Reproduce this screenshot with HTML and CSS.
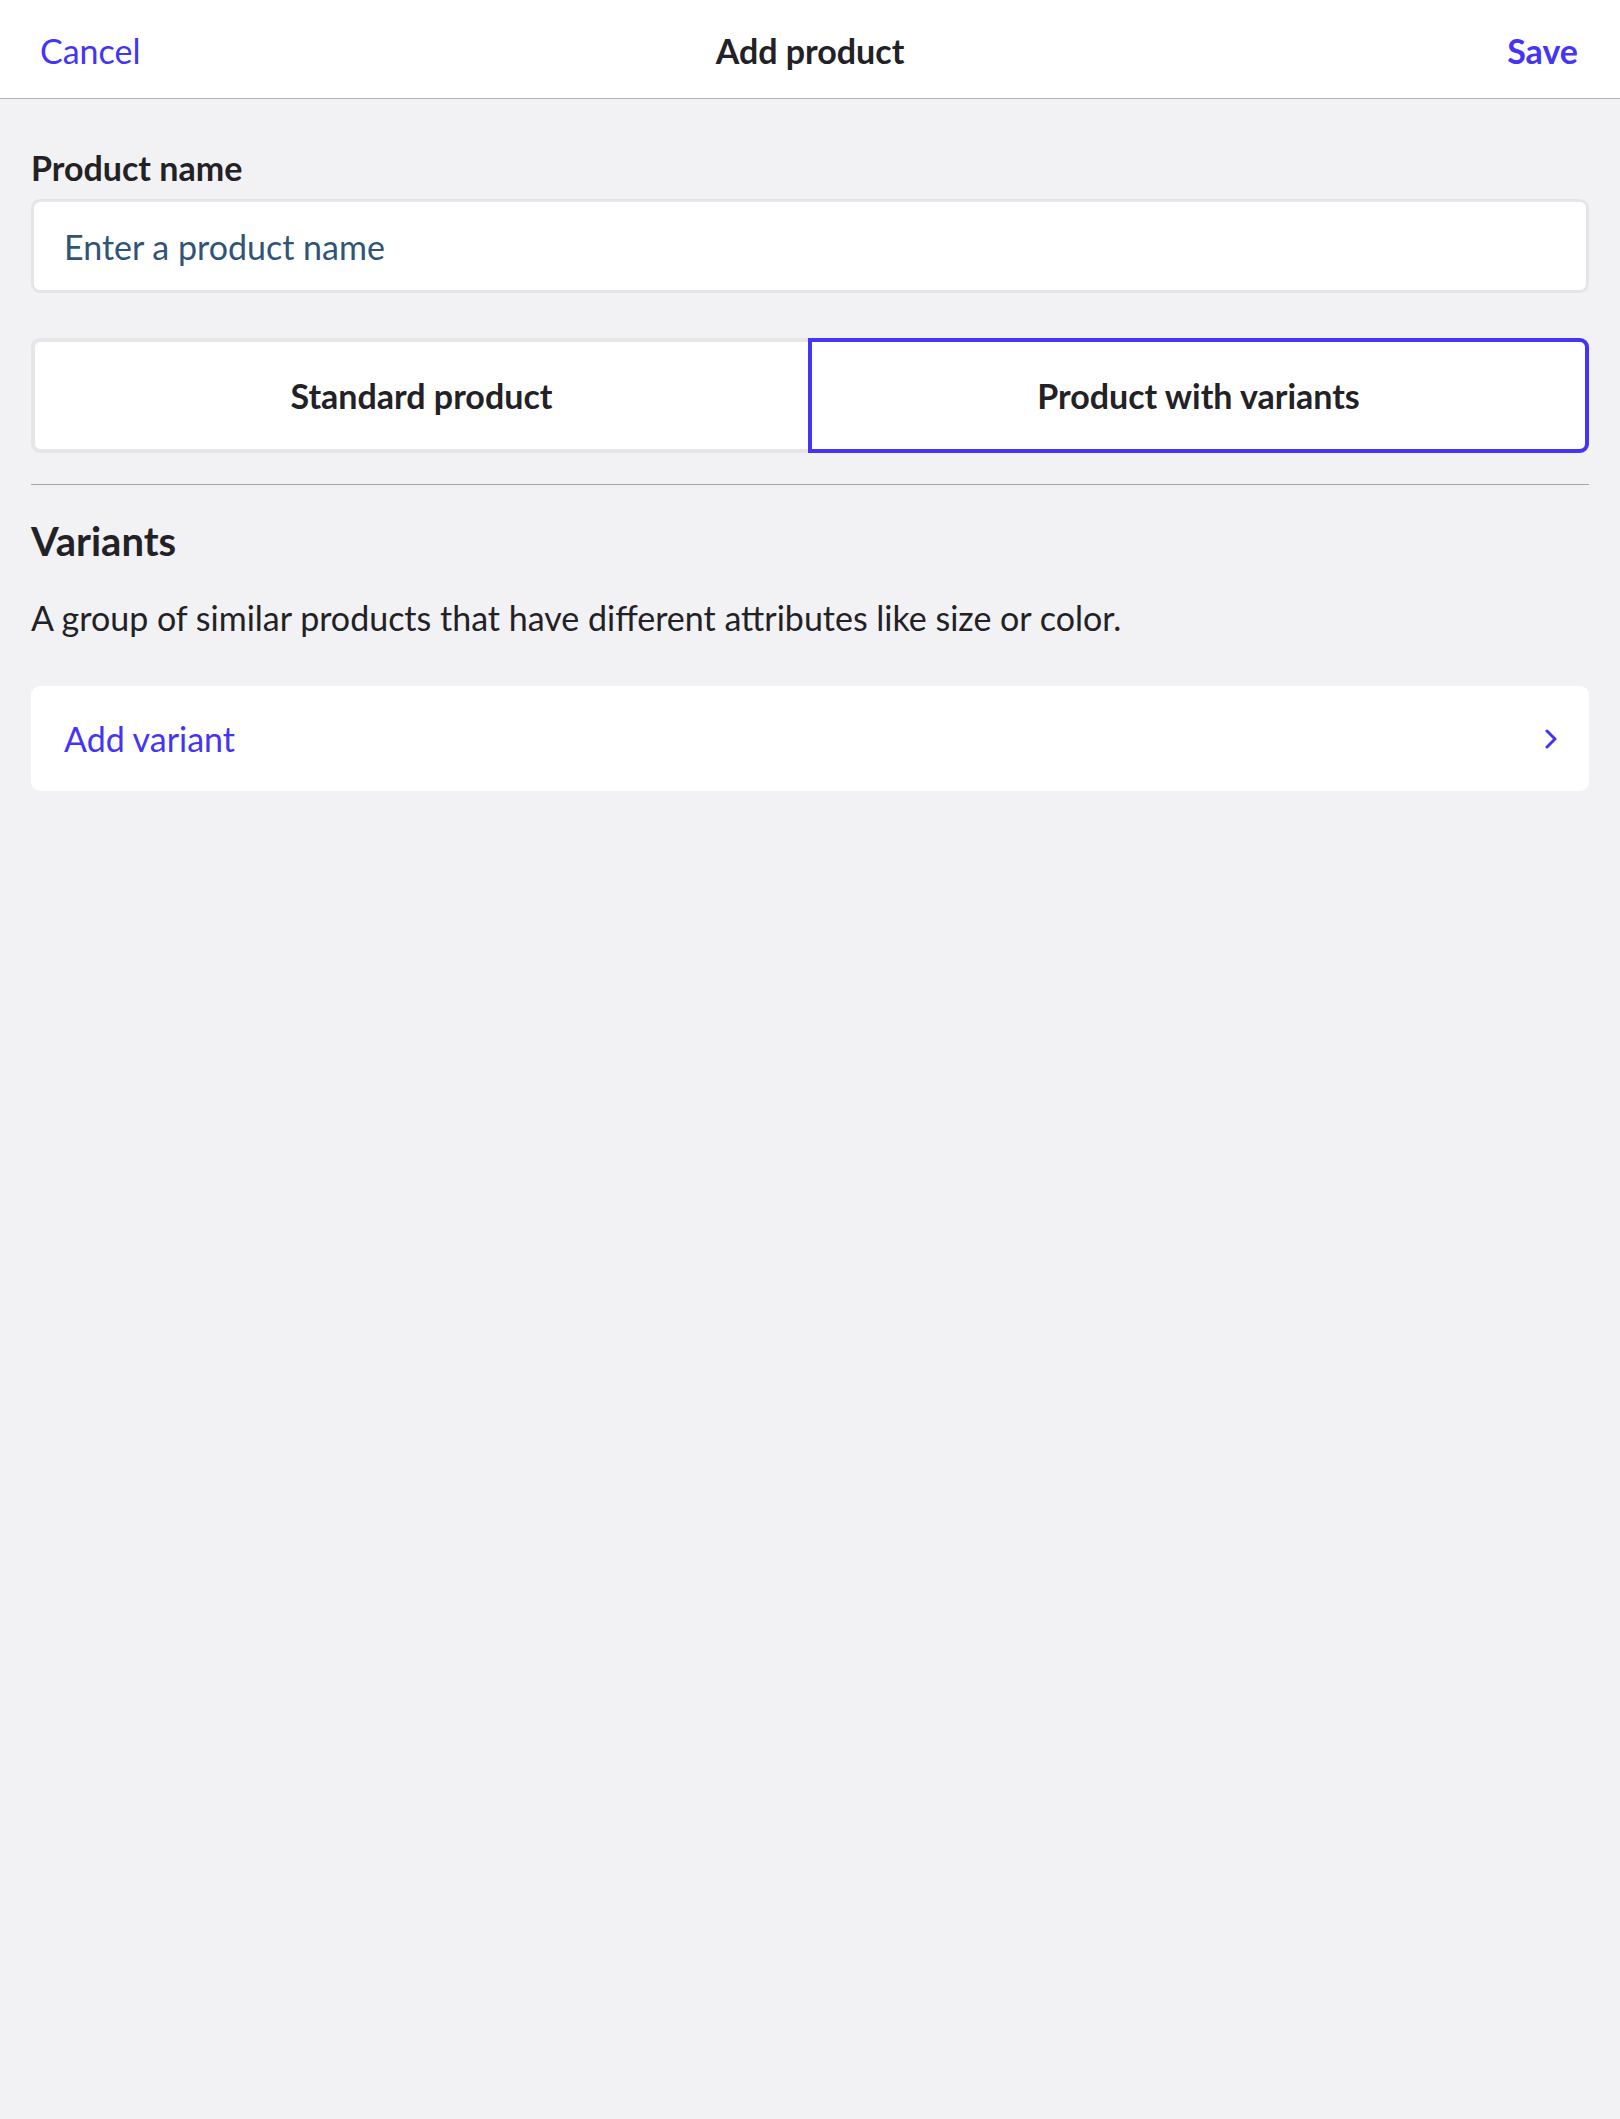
FILE: index.html
```html
<!DOCTYPE html>
<html lang="en">
<head>
<meta charset="utf-8">
<title>Add product</title>
<link rel="stylesheet" href="styles.css">
</head>
<body>
<header class="navbar">
  <a class="nav-btn nav-cancel">Cancel</a>
  <h1 class="nav-title">Add product</h1>
  <a class="nav-btn nav-save">Save</a>
</header>
<main class="content">
  <label class="field-label" for="pname">Product name</label>
  <input class="text-input" id="pname" type="text" placeholder="Enter a product name">

  <div class="segmented">
    <button class="seg-btn seg-left">Standard product</button>
    <button class="seg-btn seg-right is-active">Product with variants</button>
  </div>

  <hr class="divider">

  <h2 class="section-title">Variants</h2>
  <p class="section-desc">A group of similar products that have different attributes like size or color.</p>

  <div class="list-card">
    <span class="list-link">Add variant</span>
    <svg class="chevron" width="12" height="20" viewBox="0 0 12 20" aria-hidden="true">
      <path d="M2 2 L10 10 L2 18" fill="none" stroke="#4434f5" stroke-width="3" stroke-linecap="round" stroke-linejoin="round"/>
    </svg>
  </div>
</main>
</body>
</html>
```
FILE: styles.css
```css
* { box-sizing: border-box; }

html, body {
  margin: 0;
  padding: 0;
}

body {
  background: #f2f1f4;
  font-family: "Lato", "Noto Sans", sans-serif;
  color: #222226;
  min-height: 2119px;
}

.navbar {
  height: 99px;
  background: #ffffff;
  border-bottom: 1px solid #b4b4b8;
  display: flex;
  align-items: center;
  justify-content: space-between;
  padding: 3px 42px 0 40px;
  position: relative;
}

.nav-btn {
  font-size: 34px;
  color: #4434f5;
  cursor: pointer;
  line-height: 1;
}

.nav-save {
  font-weight: 700;
}

.nav-title {
  margin: 0;
  font-size: 34px;
  font-weight: 700;
  color: #222226;
  line-height: 1;
  position: absolute;
  left: 50%;
  transform: translateX(-50%);
}

.content {
  padding: 48px 31px 0;
  display: flex;
  flex-direction: column;
}

.field-label {
  font-size: 34px;
  font-weight: 700;
  line-height: 41px;
  color: #222226;
}

.text-input {
  margin-top: 11px;
  height: 94px;
  width: 100%;
  border: 3px solid #e5e5e8;
  border-radius: 9px;
  background: #ffffff;
  padding: 0 30px;
  font-family: inherit;
  font-size: 34px;
  color: #222226;
  outline: none;
}

.text-input::placeholder {
  color: #2f5478;
  opacity: 1;
}

.segmented {
  margin-top: 45px;
  display: grid;
  grid-template-columns: 777px 1fr;
  height: 115px;
}

.seg-btn {
  font-family: inherit;
  font-size: 34px;
  font-weight: 700;
  color: #222226;
  background: #ffffff;
  border: 4px solid #e6e6e9;
  padding: 0;
  cursor: pointer;
}

.seg-left {
  border-right: none;
  border-radius: 9px 0 0 9px;
}

.seg-right {
  border-radius: 0 9px 9px 0;
}

.seg-btn.is-active {
  border-color: #4434f5;
}

.divider {
  margin: 31px 0 0;
  border: none;
  border-top: 1px solid #a6a6aa;
  height: 0;
}

.section-title {
  margin: 33px 0 0;
  font-size: 40px;
  font-weight: 700;
  line-height: 46px;
  color: #222226;
}

.section-desc {
  margin: 33px 0 0;
  font-size: 34px;
  line-height: 41px;
  color: #222226;
}

.list-card {
  margin-top: 48px;
  height: 105px;
  background: #ffffff;
  border-radius: 9px;
  display: flex;
  align-items: center;
  justify-content: space-between;
  padding: 0 32px 0 33px;
}

.list-link {
  font-size: 34px;
  color: #4434f5;
}

.chevron {
  display: block;
}
```
